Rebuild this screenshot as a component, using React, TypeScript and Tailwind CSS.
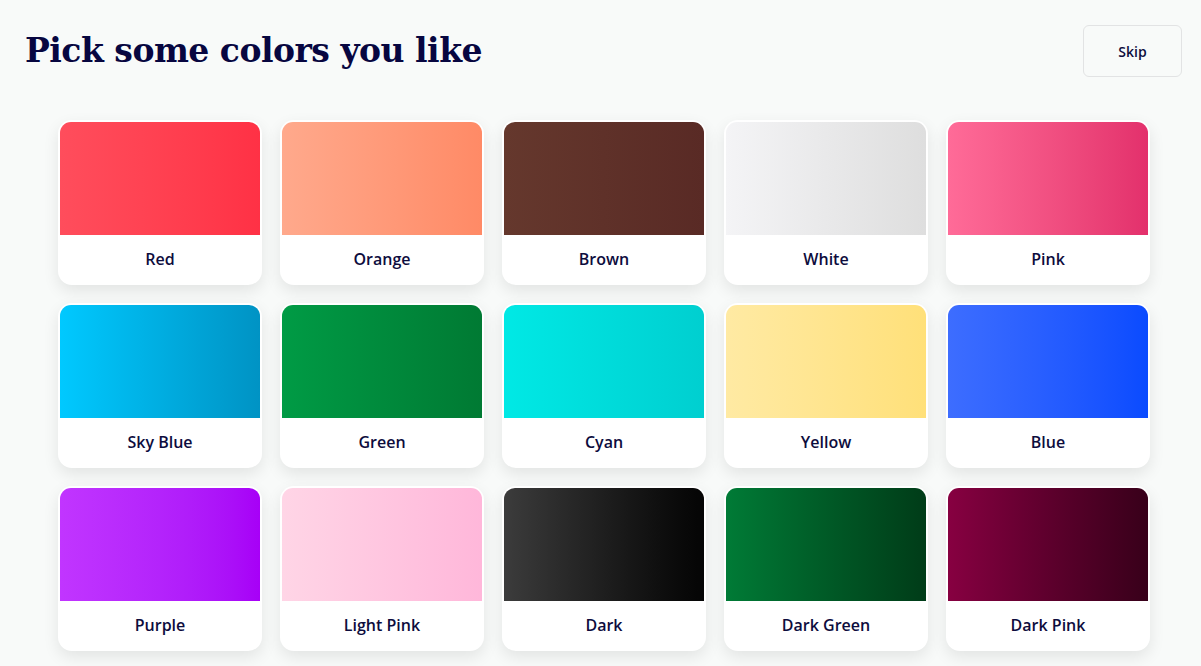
import React from 'react';

interface Swatch {
  name: string;
  gradient: string;
}

const SWATCHES: Swatch[] = [
  { name: 'Red', gradient: 'bg-gradient-to-r from-[#ff4d5c] to-[#ff3145]' },
  { name: 'Orange', gradient: 'bg-gradient-to-r from-[#ffa98c] to-[#ff8a66]' },
  { name: 'Brown', gradient: 'bg-gradient-to-r from-[#65382d] to-[#592a25]' },
  { name: 'White', gradient: 'bg-gradient-to-r from-[#f4f4f6] to-[#dedede]' },
  { name: 'Pink', gradient: 'bg-gradient-to-r from-[#ff6b98] to-[#e3306c]' },
  { name: 'Sky Blue', gradient: 'bg-gradient-to-r from-[#00c9ff] to-[#0093c4]' },
  { name: 'Green', gradient: 'bg-gradient-to-r from-[#009b45] to-[#007a33]' },
  { name: 'Cyan', gradient: 'bg-gradient-to-r from-[#00e9e5] to-[#00cfd0]' },
  { name: 'Yellow', gradient: 'bg-gradient-to-r from-[#ffeaa3] to-[#ffe079]' },
  { name: 'Blue', gradient: 'bg-gradient-to-r from-[#3d6dff] to-[#0a4bff]' },
  { name: 'Purple', gradient: 'bg-gradient-to-r from-[#c135ff] to-[#a700f7]' },
  { name: 'Light Pink', gradient: 'bg-gradient-to-r from-[#ffd5e6] to-[#ffb7da]' },
  { name: 'Dark', gradient: 'bg-gradient-to-r from-[#3c3c3c] to-[#050505]' },
  { name: 'Dark Green', gradient: 'bg-gradient-to-r from-[#007b36] to-[#003c18]' },
  { name: 'Dark Pink', gradient: 'bg-gradient-to-r from-[#870041] to-[#38001a]' },
];

function ColorCard({ swatch }: { swatch: Swatch }) {
  return (
    <button className="flex flex-col rounded-[14px] bg-white p-[2px] pb-0 text-left shadow-[0_6px_16px_rgba(0,0,0,0.09)]">
      <div className={`h-[113px] w-full rounded-t-[11px] ${swatch.gradient}`} />
      <div className="flex h-[50px] items-center justify-center pb-[2px] text-[16px] font-semibold text-[#0d0c3d]">
        {swatch.name}
      </div>
    </button>
  );
}

export default function App() {
  return (
    <div className="min-h-[666px] bg-[#f8faf9] font-['Open_Sans',sans-serif]">
      {/* Header */}
      <div className="flex items-start justify-between pl-[25px] pr-[19px] pt-[25px]">
        <h1 className="mt-[5px] font-['DejaVu_Serif',serif] text-[33px] font-bold leading-[42px] tracking-[-0.5px] text-[#070640]">
          Pick some colors you like
        </h1>
        <button className="h-[52px] w-[99px] rounded-[6px] border border-[#e2e3e4] bg-[#f8faf9] text-[14px] font-semibold text-[#0d0c3d]">
          Skip
        </button>
      </div>

      {/* Color grid */}
      <div className="ml-[58px] mt-[43px] grid w-[1092px] grid-cols-5 gap-[18px] pb-[15px]">
        {SWATCHES.map((swatch) => (
          <ColorCard key={swatch.name} swatch={swatch} />
        ))}
      </div>
    </div>
  );
}
